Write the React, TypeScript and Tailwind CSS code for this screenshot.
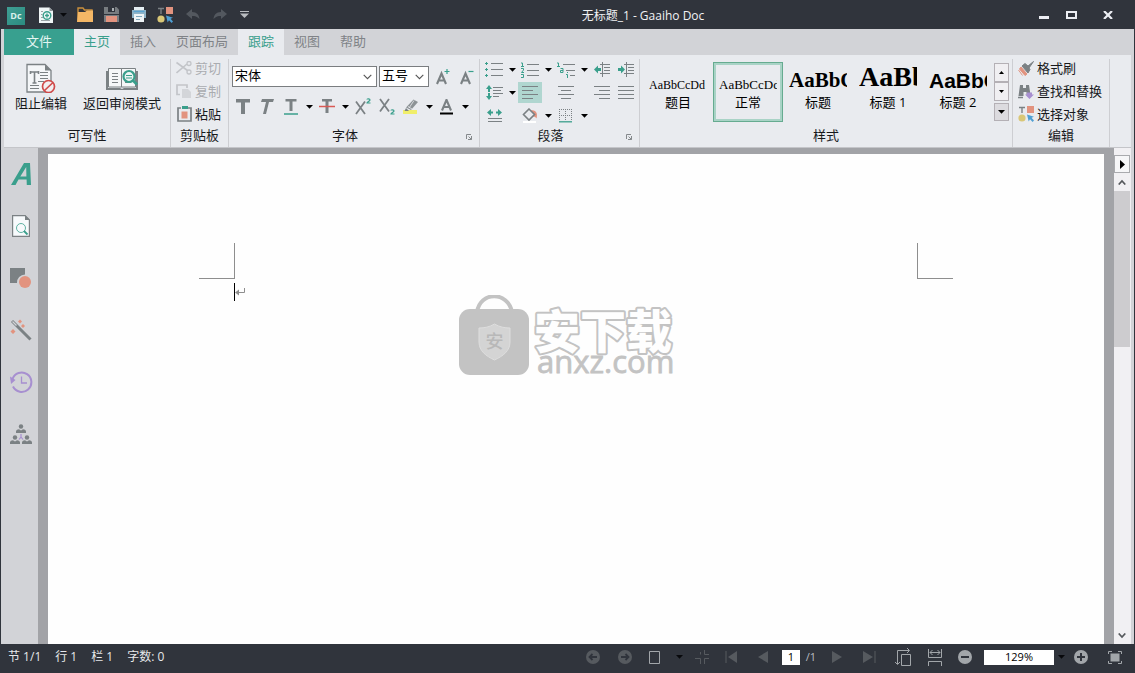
import React from "react";

type Kids = { children?: React.ReactNode };

const GRAY = "#7b8184";
const GREEN = "#3a9f8c";
const RED = "#e2937f";
const PURPLE = "#a78fd0";

function Svg({ w, h, children }: { w: number; h: number } & Kids) {
  return (
    <svg width={w} height={h} viewBox={`0 0 ${w} ${h}`} fill="none" className="block shrink-0" aria-hidden="true">
      {children}
    </svg>
  );
}

function Caret({ color = "#000" }: { color?: string }) {
  return (
    <Svg w={7} h={4}>
      <path d="M0 0h7L3.5 3.8z" fill={color} />
    </Svg>
  );
}

function Chevron() {
  return (
    <Svg w={9} h={6}>
      <path d="M0.7 0.8L4.5 4.6L8.3 0.8" stroke="#555" strokeWidth="1.1" />
    </Svg>
  );
}

/* ---------- Title bar ---------- */

function QuickButton({ label, children }: { label: string } & Kids) {
  return (
    <button aria-label={label} className="flex h-6 w-[27px] items-center justify-center">
      {children}
    </button>
  );
}

function ObjectsIcon() {
  return (
    <Svg w={17} h={16}>
      <path d="M1 1.5h6M4 1.5V7" stroke={GRAY} strokeWidth="1.4" />
      <rect x="9" y="0" width="7" height="7" fill={RED} />
      <circle cx="4" cy="12" r="3.6" fill="#d9c777" />
      <path d="M9 8.5l7 2.3-2.4 1 2.4 2.7-1.4 1.4-2.6-2.6-1.3 2.2z" fill="#4f9fd3" />
    </Svg>
  );
}

function TitleBar() {
  return (
    <header className="flex h-[29px] shrink-0 items-center bg-[#30343c] pl-[7px]">
      <div className="mt-[2px] flex size-[18px] items-center justify-center bg-gradient-to-br from-[#3f9f94] to-[#2b8b80] font-['Open_Sans',sans-serif] text-[9px] leading-none font-bold text-[#d8f0ec]">
        Dc
      </div>
      <button aria-label="新建" className="ml-[9px] flex h-6 w-6 items-center justify-center">
        <Svg w={15} h={16}>
          <path d="M0 0.5h10.5L14 4v12H0z" fill="#f0f6f7" />
          <path d="M10.5 0.5V4H14z" fill="#8d9498" />
          <path d="M2 4.5h2M2 7.5h1.5M2 10.5h2M2 13.5h9" stroke="#9aa3a6" />
          <circle cx="8" cy="8.5" r="3.8" stroke={GREEN} strokeWidth="1.4" />
          <path d="M8 6.5v4M6 8.5h4" stroke={GREEN} strokeWidth="1.4" />
        </Svg>
      </button>
      <button aria-label="新建选项" className="flex h-6 w-[13px] items-center pl-[2px]">
        <Caret color="#08090c" />
      </button>
      <QuickButton label="打开">
        <Svg w={16} h={15}>
          <path d="M1 14.5V1h5l1.500 2H15v11.5" stroke="#c98f3c" strokeWidth="1.4" />
          <path d="M1 5h7l2-1.500h6V15H0z" fill="#f4b766" />
        </Svg>
      </QuickButton>
      <QuickButton label="保存">
        <Svg w={15} h={15}>
          <path d="M0 0h12.5L15 2.5V15H0z" fill="#777c80" />
          <path d="M4 0h7v5H4z" fill="#30343c" />
          <path d="M8 1h2v3H8z" fill="#aab0b3" />
          <path d="M0 7.5h15" stroke="#30343c" />
          <path d="M2 9h11v6H2z" fill={RED} />
        </Svg>
      </QuickButton>
      <QuickButton label="打印">
        <Svg w={16} h={15}>
          <path d="M3 0h10v4H3z" fill="#e4eef2" />
          <path d="M1 3h14v8H1z" fill="#8fb4c8" />
          <path d="M2.5 4.5h11" stroke="#5aa3d0" strokeWidth="1.3" />
          <path d="M3 7h10v8H3z" fill="#eef4f6" />
          <path d="M5 9.5h6M5 12.5h4" stroke="#7da7bd" />
        </Svg>
      </QuickButton>
      <QuickButton label="选择对象"><ObjectsIcon /></QuickButton>
      <QuickButton label="撤销">
        <Svg w={14} h={11}>
          <path d="M0 5l6-5v3c5 0 7 3 7.5 7C11 7.5 9 7 6 7v3z" fill="#53585f" />
        </Svg>
      </QuickButton>
      <QuickButton label="恢复">
        <Svg w={14} h={11}>
          <path d="M14 5L8 0v3C3 3 1 6 0.5 10 3 7.5 5 7 8 7v3z" fill="#53585f" />
        </Svg>
      </QuickButton>
      <button aria-label="自定义快速访问工具栏" className="flex h-6 w-[22px] items-center justify-center">
        <Svg w={9} h={7}>
          <path d="M0 0.5h9" stroke="#b9bcc0" />
          <path d="M0 2.5h9L4.5 7z" fill="#b9bcc0" />
        </Svg>
      </button>
      <h1 className="flex-1 pt-[2px] text-center text-[12px] leading-5 text-[#f1f2f4]">无标题_1 - Gaaiho Doc</h1>
      <div className="flex pr-[6px]">
        <button aria-label="最小化" className="flex h-7 w-[26px] items-center justify-center">
          <Svg w={10} h={8}><path d="M0 6.5h10" stroke="#eceef3" strokeWidth="3" /></Svg>
        </button>
        <button aria-label="最大化" className="flex h-7 w-[29px] items-center justify-center">
          <Svg w={11} h={8}><path d="M1 1h9v6H1z" stroke="#eceef3" strokeWidth="2" /></Svg>
        </button>
        <button aria-label="关闭" className="flex h-7 w-[43px] items-center justify-center">
          <Svg w={10} h={8}><path d="M1 0l8 8M9 0L1 8" stroke="#eceef3" strokeWidth="2.2" /></Svg>
        </button>
      </div>
    </header>
  );
}

/* ---------- Tabs ---------- */

function Tab({ active, lit, children }: { active?: boolean; lit?: boolean } & Kids) {
  const tone = active || lit ? "bg-[#e9ebef] text-[#3a9f8c]" : "text-[#808387]";
  return (
    <button role="tab" aria-selected={!!active} className={`px-[10px] pb-[3px] text-[13px] leading-5 ${tone}`}>
      {children}
    </button>
  );
}

function Tabs() {
  return (
    <nav role="tablist" className="flex h-[26px] shrink-0">
      <button className="w-[70px] bg-[#38a08f] pb-[3px] text-[13px] leading-5 text-[#e4f6f2]">文件</button>
      <Tab active>主页</Tab>
      <Tab>插入</Tab>
      <Tab>页面布局</Tab>
      <Tab lit>跟踪</Tab>
      <Tab>视图</Tab>
      <Tab>帮助</Tab>
    </nav>
  );
}

/* ---------- Ribbon ---------- */

function Group({ title, width, launcher, children }: { title: string; width: string; launcher?: boolean } & Kids) {
  return (
    <section className={`relative flex shrink-0 flex-col border-r border-[#cdced2] ${width}`}>
      <div className="flex-1">{children}</div>
      <h2 className={`pb-[2px] text-center text-[13px] leading-[19px] text-[#17191c] ${launcher ? "pr-[18px]" : ""}`}>{title}</h2>
      {launcher && (
        <button aria-label={`${title}设置`} className="absolute right-[7px] bottom-[7px]">
          <Svg w={6} h={6}>
            <path d="M0.5 5V0.5H5M5.5 2v3.5H2M2.5 2.5l3 3" stroke="#85898c" />
          </Svg>
        </button>
      )}
    </section>
  );
}

function Tool({ label, drop, active, children }: { label: string; drop?: boolean; active?: boolean } & Kids) {
  return (
    <div className="flex">
      <button
        aria-label={label}
        className={`flex h-[21px] w-6 items-center justify-center ${active ? "bg-[#b0d6d0]" : ""}`}
      >
        {children}
      </button>
      {drop && (
        <button aria-label={`${label}选项`} className="flex h-[21px] w-3 items-center justify-center">
          <Caret />
        </button>
      )}
    </div>
  );
}

function SmallButton({ disabled, icon, children }: { disabled?: boolean; icon: React.ReactNode } & Kids) {
  return (
    <button
      disabled={disabled}
      className={`flex h-[18px] items-center gap-[3px] text-[13px] leading-[18px] ${disabled ? "text-[#a9acb0]" : "text-[#17191c]"}`}
    >
      <span className="flex w-4 justify-center">{icon}</span>
      {children}
    </button>
  );
}

function WriteGroup() {
  return (
    <Group title="可写性" width="w-[167px]">
      <div className="flex gap-4 pt-[3px] pl-[11px] text-[13px] leading-5 text-[#17191c]">
        <button className="flex flex-col items-center">
          <Svg w={30} h={31}>
            <path d="M1 2.5h18l6 6V30H1z" fill="#f4f6f8" stroke={GRAY} strokeWidth="1.3" />
            <path d="M19 2.5v6h6z" fill={GRAY} />
            <path d="M4 10h9M8.5 10v11M6.5 21h4M4.5 9v3M12.5 9v3" stroke={GRAY} strokeWidth="1.6" />
            <path d="M14 10.5h8M14 13.5h8M14 16.5h8M12 19.5h6M4 23.5h9M4 26.5h9" stroke={GRAY} />
            <circle cx="22.5" cy="24.5" r="6" fill="#f1eef0" stroke="#d04a4a" strokeWidth="1.7" />
            <path d="M18.5 28.500L27 20.5" stroke="#d04a4a" strokeWidth="1.7" />
          </Svg>
          阻止编辑
        </button>
        <button className="flex flex-col items-center">
          <Svg w={32} h={31}>
            <path d="M0 9h2v17h12l2 1 2-1h12V9h2v19H0z" fill={GRAY} />
            <path d="M2.5 6.5h13v18.5h-13zM15.5 6.5h14v18.5h-14z" fill="#f5f7f8" stroke={GRAY} />
            <path d="M6 11.5h6M6 14.5h6M6 17.5h6M6 20.5h6M19 11.5h3M19 20.5h6" stroke={GRAY} />
            <circle cx="23" cy="14.5" r="5.5" fill="#eef5f4" stroke={GREEN} strokeWidth="2.2" />
            <path d="M20 13.5h6M20 16h6" stroke={GREEN} />
            <path d="M27 18.5l4 4" stroke={GREEN} strokeWidth="2.8" />
          </Svg>
          返回审阅模式
        </button>
      </div>
    </Group>
  );
}

function ClipboardGroup() {
  return (
    <Group title="剪贴板" width="w-[58px]">
      <div className="flex flex-col gap-[5px] pl-[5px]">
        <SmallButton
          disabled
          icon={
            <Svg w={16} h={14}>
              <path d="M0.5 1.5l11 8M0.5 12L11 3" stroke="#c3c5c9" strokeWidth="1.6" />
              <circle cx="13" cy="2.5" r="2" stroke="#c3c5c9" strokeWidth="1.3" />
              <circle cx="13" cy="11" r="2" stroke="#c3c5c9" strokeWidth="1.3" />
            </Svg>
          }
        >
          剪切
        </SmallButton>
        <SmallButton
          disabled
          icon={
            <Svg w={16} h={14}>
              <path d="M4 10.5H1V1h10v3" stroke="#c3c5c9" strokeWidth="1.7" />
              <path d="M6 5h6l3 3v6H6z" fill="#d3d5d9" />
            </Svg>
          }
        >
          复制
        </SmallButton>
        <SmallButton
          icon={
            <Svg w={15} h={16}>
              <path d="M4 2H1v13h13V2h-3" stroke={GRAY} strokeWidth="1.7" />
              <path d="M5 0h6v3H5z" fill={GREEN} />
              <path d="M4.5 5.5h6v7h-6z" fill={RED} />
            </Svg>
          }
        >
          粘贴
        </SmallButton>
      </div>
    </Group>
  );
}

function Combo({ label, width, value }: { label: string; width: string; value: string }) {
  return (
    <label className={`relative block h-[21px] border border-[#7a7d80] bg-white ${width}`}>
      <span className="sr-only">{label}</span>
      <select defaultValue={value} className="block h-full w-full appearance-none bg-transparent pb-[2px] pl-[2px] text-[13px] leading-[17px] text-black outline-none">
        <option>{value}</option>
      </select>
      <span className="pointer-events-none absolute top-[7px] right-[4px]">
        <Chevron />
      </span>
    </label>
  );
}

function Letter({ d, w = 2.1 }: { d: string; w?: number }) {
  return <path d={d} stroke={GRAY} strokeWidth={w} />;
}

function FontGroup() {
  return (
    <Group title="字体" width="w-[251px]" launcher>
      <div className="flex items-center gap-[2px] pt-[7px] pl-[3px]">
        <Combo label="字体" width="w-[145px]" value="宋体" />
        <Combo label="字号" width="w-[50px]" value="五号" />
        <div className="flex">
          <Tool label="增大字号">
            <Svg w={14} h={16}>
              <Letter d="M1 15L5.500 4.500L10 15M2.800 11.500h5.500" />
              <path d="M11 0v5M8.5 2.5h5" stroke={GREEN} strokeWidth="1.2" />
            </Svg>
          </Tool>
          <Tool label="减小字号">
            <Svg w={14} h={16}>
              <Letter d="M1 15L5.500 4.500L10 15M2.800 11.500h5.500" />
              <path d="M8.5 2.5h5" stroke={GREEN} strokeWidth="1.2" />
            </Svg>
          </Tool>
        </div>
      </div>
      <div className="flex pt-[9px] pl-[2px]">
        <Tool label="加粗">
          <Svg w={14} h={15}><path d="M0 0h14v3.5H9V15H5V3.5H0z" fill={GRAY} /></Svg>
        </Tool>
        <Tool label="斜体">
          <Svg w={14} h={15}><path d="M2 0h12l-1 3H9L6 15H3L6 3H1z" fill={GRAY} /></Svg>
        </Tool>
        <Tool label="下划线" drop>
          <Svg w={14} h={17}>
            <path d="M1.500 1h11v2.500H8.500V13h-3V3.500h-4z" fill={GRAY} />
            <path d="M0 16h14" stroke={GREEN} strokeWidth="1.5" />
          </Svg>
        </Tool>
        <Tool label="删除线" drop>
          <Svg w={16} h={15}>
            <path d="M3 0h10v2.5H9.5V14h-3V2.500H3z" fill={GRAY} />
            <path d="M0 7.5h16" stroke="#d95a55" strokeWidth="1.5" />
          </Svg>
        </Tool>
        <Tool label="上标">
          <Svg w={16} h={17}>
            <Letter d="M1 3.5l9 12.500M10 3.500l-9 12.500" w={1.8} />
            <path d="M12 1.5c0-1 3-1 3 0.500 0 1-3 2-3 3h3.500" stroke={GREEN} strokeWidth="1.2" />
          </Svg>
        </Tool>
        <Tool label="下标">
          <Svg w={16} h={17}>
            <Letter d="M1 1l9 12.500M10 1l-9 12.500" w={1.8} />
            <path d="M12 12.5c0-1 3-1 3 0.500 0 1-3 2-3 3h3.500" stroke={GREEN} strokeWidth="1.2" />
          </Svg>
        </Tool>
        <Tool label="突出显示" drop>
          <Svg w={16} h={17}>
            <path d="M0 12h14v4H0z" fill="#f0ee6a" />
            <path d="M3 9.5L10.500 1.500L15 4L8 12z" fill="#8d9396" />
            <path d="M3 10l-1.500 3H6z" fill={GRAY} />
            <path d="M5 8.5l4 2.500M11 2.500L6 10" stroke="#e9ebef" strokeWidth="0.8" />
          </Svg>
        </Tool>
        <Tool label="字体颜色" drop>
          <Svg w={14} h={16}>
            <Letter d="M2 11.500L6.500 0.800L11 11.500M3.800 8h5.500" />
            <path d="M0 14.5h13" stroke="#000" strokeWidth="2" />
          </Svg>
        </Tool>
      </div>
    </Group>
  );
}

function Lines({ d }: { d: string }) {
  return (
    <Svg w={16} h={15}>
      <path d={d} stroke={GRAY} />
    </Svg>
  );
}

function ParagraphGroup() {
  return (
    <Group title="段落" width="w-[160px]" launcher>
      <div className="grid grid-cols-[36px_36px_36px_24px_24px] grid-rows-[23px_23px_21px] pl-[2px]">
        <Tool label="项目符号" drop>
          <Svg w={18} h={15}>
            <path d="M6 1.5h12M6 7.5h12M6 13.5h12" stroke={GRAY} />
            <path d="M0 1.5h3M1.500 0v3M0 7.500h3M1.500 6v3M0 13.500h3M1.500 12v3" stroke={GREEN} />
          </Svg>
        </Tool>
        <Tool label="编号" drop>
          <Svg w={18} h={16}>
            <path d="M6 2.5h12M6 8.5h12M6 13.5h12" stroke={GRAY} />
            <path d="M0 1h1.500V4.500M0 4.500h3M0 6.500h2.500v1.500L0.500 10.500H3M0 12.500h2.500V15.500H0" stroke={GREEN} />
          </Svg>
        </Tool>
        <Tool label="多级列表" drop>
          <Svg w={18} h={16}>
            <path d="M6 2.5h12M9 8.5h9M13 13.5h5" stroke={GRAY} />
            <path d="M0 1h1.500V4.500M0 4.500h3M3.500 6.500H6v4H3.500v-2H6M10.500 10v1M9 12.500h1.500V16" stroke={GREEN} />
          </Svg>
        </Tool>
        <Tool label="减少缩进">
          <Svg w={17} h={15}>
            <path d="M8.500 0v15M6 2.500h10M10 5.500h6M10 8.500h6M6 11.500h10" stroke={GRAY} />
            <path d="M0 7.500l4-4v2.500h3v3H4v2.500z" fill={GREEN} />
          </Svg>
        </Tool>
        <Tool label="增加缩进">
          <Svg w={17} h={15}>
            <path d="M8.500 0v15M6 2.500h10M10 5.500h6M10 8.500h6M6 11.500h10" stroke={GRAY} />
            <path d="M7 7.500l-4-4v2.500H0v3h3v2.500z" fill={GREEN} />
          </Svg>
        </Tool>
        <Tool label="行距" drop>
          <Svg w={17} h={15}>
            <path d="M7 2.500h10M7 5.500h8M7 8.500h10M7 11.500h6" stroke={GRAY} />
            <path d="M3 0L0 4h2v3h2V4h2zM3 15L0 11h2V8h2v3h2z" fill={GREEN} />
          </Svg>
        </Tool>
        <Tool label="左对齐" active><Lines d="M0 1.500h16M0 5.500h11M0 9.500h16M0 13.500h11" /></Tool>
        <Tool label="居中"><Lines d="M0 1.500h16M3 5.500h10M0 9.500h16M3 13.500h10" /></Tool>
        <Tool label="右对齐"><Lines d="M0 1.500h16M5 5.500h11M0 9.500h16M5 13.500h11" /></Tool>
        <Tool label="两端对齐"><Lines d="M0 1.500h16M0 5.500h16M0 9.500h16M0 13.500h16" /></Tool>
        <Tool label="字符宽度">
          <Svg w={15} h={14}>
            <path d="M0 3.500L4 0v2.500h2v2H4V7zM15 3.500L11 0v2.500H9v2h2V7z" fill={GREEN} />
            <path d="M1 9.500h14M1 12.500h14" stroke={GRAY} />
          </Svg>
        </Tool>
        <Tool label="底纹" drop>
          <Svg w={16} h={15}>
            <path d="M9 2.500c5-1 7 3 5.500 8-1-1.500-2-2-4-2z" fill={RED} />
            <path d="M7 1l5.500 5.500L7 12 1.500 6.500z" fill="#e9ebef" stroke={GRAY} strokeWidth="1.6" />
            <path d="M1 14h13" stroke="#fff" strokeWidth="2" />
          </Svg>
        </Tool>
        <Tool label="边框" drop>
          <Svg w={14} h={14}>
            <path d="M0.500 0v12M6.500 0v12M12.500 0v12M0 0.500h13M0 6.500h13" stroke={GRAY} strokeDasharray="1 1" />
            <path d="M0 12.800h13" stroke={GREEN} strokeWidth="1.3" />
          </Svg>
        </Tool>
      </div>
    </Group>
  );
}

const styleItems = [
  { name: "题目", font: "font-['Liberation_Serif',serif] text-[12px]" },
  { name: "正常", font: "font-['Liberation_Serif',serif] text-[13px]", on: true },
  { name: "标题", font: "font-['Liberation_Serif',serif] text-[21px] font-bold" },
  { name: "标题 1", font: "font-['Liberation_Serif',serif] text-[28px] font-bold" },
  { name: "标题 2", font: "font-['Liberation_Sans',sans-serif] text-[21px] font-bold" },
];

function StylesGroup() {
  return (
    <Group title="样式" width="w-[373px]">
      <div className="flex pt-[3px] pl-[3px]">
        {styleItems.map((s) => (
          <button
            key={s.name}
            aria-label={s.name}
            className={`flex h-[60px] w-[70px] flex-col border px-[5px] pt-px text-black ${s.on ? "border-[#66ab90] inset-ring-2 inset-ring-[#a9d3c6]" : "border-transparent"}`}
          >
            <span className={`flex h-[27px] w-full items-end overflow-hidden leading-none ${s.font}`}>AaBbCcDd</span>
            <span className="w-full text-center text-[13px] leading-[22px]">{s.name}</span>
          </button>
        ))}
        <div className="flex flex-col pt-[1px] pl-[1px]">
          <button aria-label="上一行" className="flex h-[19px] w-[15px] items-center justify-center border border-[#b4b0b5] bg-[#f0eff2]">
            <Svg w={5} h={3}><path d="M0 3h5L2.500 0z" fill="#000" /></Svg>
          </button>
          <button aria-label="下一行" className="flex h-[19px] w-[15px] items-center justify-center border border-[#b4b0b5] bg-[#f0eff2]">
            <Svg w={5} h={3}><path d="M0 0h5L2.500 3z" fill="#000" /></Svg>
          </button>
          <button aria-label="更多样式" className="mt-[2px] flex h-[18px] w-[15px] items-center justify-center border border-[#b4b0b5] bg-[#dcdbdf]">
            <Caret />
          </button>
        </div>
      </div>
    </Group>
  );
}

function EditGroup() {
  return (
    <Group title="编辑" width="w-[97px]">
      <div className="flex flex-col gap-[5px] pl-[5px]">
        <SmallButton
          icon={
            <Svg w={16} h={15}>
              <path d="M15.500 0.500L10 5l-3-2.500L4 5l6 7 2-3.500L11 7z" fill={GRAY} stroke={GRAY} />
              <path d="M3 6l6 7-2 1.500L1.500 8zM0.500 9l4 5.500" fill={RED} stroke={RED} />
            </Svg>
          }
        >
          格式刷
        </SmallButton>
        <SmallButton
          icon={
            <Svg w={16} h={15}>
              <path d="M2 1h3v3h3V1h3l1.500 10H8.500V8h-3v4H0.500z" fill={GRAY} />
              <path d="M0 13.500h5" stroke={GRAY} strokeWidth="1.5" />
              <path d="M9 8.500h5v2h2L11.500 15 7 10.500h2z" fill={PURPLE} />
            </Svg>
          }
        >
          查找和替换
        </SmallButton>
        <SmallButton icon={<ObjectsIcon />}>选择对象</SmallButton>
      </div>
    </Group>
  );
}

function Ribbon() {
  return (
    <div className="flex h-[93px] shrink-0 border-b border-[#c4c5c9] bg-[#e9ebef] pt-1">
      <WriteGroup />
      <ClipboardGroup />
      <FontGroup />
      <ParagraphGroup />
      <StylesGroup />
      <EditGroup />
    </div>
  );
}

/* ---------- Work area ---------- */

function SideButton({ label, children }: { label: string } & Kids) {
  return (
    <button aria-label={label} className="flex h-[52px] w-full items-center justify-center">
      {children}
    </button>
  );
}

function Person({ x, y }: { x: number; y: number }) {
  return (
    <g fill={GRAY}>
      <circle cx={x} cy={y} r="2.2" />
      <path d={`M${x - 5} ${y + 6.5}v-1.500q0-2 3-2.300l2 1.300 2-1.300q3 0.300 3 2.300v1.500z`} />
    </g>
  );
}

function Sidebar() {
  return (
    <aside className="flex w-[37px] shrink-0 flex-col bg-[#d2d3d7] pl-[3px]">
      <SideButton label="文本">
        <Svg w={20} h={22}>
          <path d="M0 22L13 0h6l1 22h-4.200l-0.200-5.500H7.500L4.500 22zM9.300 13.500h6.100L15.200 4z" fill={GREEN} fillRule="evenodd" />
        </Svg>
      </SideButton>
      <SideButton label="预览">
        <Svg w={18} h={22}>
          <path d="M0.600 0.600h12.500L17.400 5v16.400H0.600z" fill="#f7fafc" stroke={GRAY} strokeWidth="1.2" />
          <path d="M13 0v5h5z" fill={GRAY} />
          <circle cx="9" cy="13" r="4.5" stroke={GREEN} strokeWidth="0.8" />
          <path d="M12 16l3.500 3.500" stroke={GREEN} strokeWidth="1.8" />
        </Svg>
      </SideButton>
      <SideButton label="形状">
        <Svg w={22} h={20}>
          <path d="M0 0h15v6.500a8 8 0 0 0-8 8.500H0z" fill={GRAY} />
          <circle cx="15" cy="14" r="6" fill={RED} />
        </Svg>
      </SideButton>
      <SideButton label="魔术棒">
        <Svg w={22} h={22}>
          <path d="M2 2l18.500 18.500" stroke={GRAY} strokeWidth="3" />
          <path d="M2.500 2.500l4 4" stroke="#d2d3d7" strokeWidth="1.2" />
          <path d="M3 10l2.500 2.500L3 15 0.500 12.500zM10 0.500L12 2.500l-2 2-2-2zM13 5l2 2-2 2-2-2z" fill={RED} />
        </Svg>
      </SideButton>
      <SideButton label="历史记录">
        <Svg w={23} h={22}>
          <path d="M2.500 8A9.700 9.700 0 1 1 3 15.500" stroke={PURPLE} strokeWidth="2" />
          <path d="M0 5.500L5.500 9 1 13z" fill={PURPLE} />
          <path d="M11.500 5.500V12H17" stroke={PURPLE} strokeWidth="1.3" />
        </Svg>
      </SideButton>
      <SideButton label="协作">
        <Svg w={22} h={21}>
          <Person x={11} y={2.5} />
          <Person x={5} y={13.5} />
          <Person x={17} y={13.5} />
          <path d="M11 10v3l-2 2.500M11 13l2 2.500" stroke={PURPLE} strokeWidth="1.2" />
        </Svg>
      </SideButton>
    </aside>
  );
}

function Watermark() {
  return (
    <svg width="216" height="84" viewBox="0 0 216 84" fill="none" className="absolute top-[141px] left-[411px]" role="img" aria-label="安下载 anxz.com">
      <path d="M18 17C21 -4 49 -4 53 17" stroke="#c3c3c3" strokeWidth="4" />
      <rect x="0" y="14" width="70" height="66" rx="11" fill="#c3c3c3" />
      <path d="M35.500 29c5 3 10 4 15.500 4v14c0 9-7 14-15.500 18C27 61 20 56 20 47V33c5.500 0 10.500-1 15.500-4z" fill="#d4d4d4" stroke="#dedede" />
      <text x="35.500" y="53" textAnchor="middle" fontSize="18" fontWeight="500" fill="#b8b8b8">安</text>
      <text x="75" y="53" fontSize="46" fontWeight="900" fill="#fefefe" stroke="#c3c3c3" strokeWidth="4" strokeLinejoin="round" paintOrder="stroke">安下载</text>
      <text x="78" y="78" className="font-['Open_Sans',sans-serif]" fontSize="31" fill="#c3c3c3" stroke="#c3c3c3" strokeWidth="0.8">anxz.com</text>
    </svg>
  );
}

function Document() {
  return (
    <main className="flex min-w-0 flex-1 bg-[#a2a3a7] pt-[6px] pr-[10px] pl-[10px]">
      <div className="relative flex-1 bg-[#fefefe] pt-[89px]">
        <div className="flex justify-between px-[151px]">
          <div className="size-9 border-r border-b border-[#8e8e8e]" />
          <div className="size-9 border-b border-l border-[#8e8e8e]" />
        </div>
        <div className="mt-1 flex items-center pl-[186px]">
          <div className="h-[18px] w-px bg-black" />
          <Svg w={10} h={8}>
            <path d="M9.500 0v4.500H3" stroke="#8e8e8e" />
            <path d="M0 4.500L4 1.500v6z" fill="#8e8e8e" />
          </Svg>
        </div>
        <Watermark />
      </div>
    </main>
  );
}

function ScrollBar() {
  return (
    <div className="flex w-[17px] shrink-0 flex-col bg-[#f1f0f3] pr-px">
      <div className="h-[8px] shrink-0 border-b border-[#a9aaae]" />
      <button aria-label="展开面板" className="flex h-[17px] shrink-0 items-center justify-center border border-t-0 border-[#a9aaae] bg-[#f6f6f8]">
        <Svg w={5} h={9}><path d="M0 0v9l5-4.500z" fill="#000" /></Svg>
      </button>
      <button aria-label="向上滚动" className="flex h-[18px] shrink-0 items-center justify-center">
        <Svg w={8} h={6}><path d="M0.700 5.500L4 2l3.300 3.500" stroke="#55585c" strokeWidth="1.7" /></Svg>
      </button>
      <div className="h-[156px] shrink-0 bg-[#cdcccf]" />
      <div className="flex-1" />
      <button aria-label="向下滚动" className="flex h-[17px] shrink-0 items-center justify-center">
        <Svg w={8} h={6}><path d="M0.700 0.500L4 4l3.300-3.500" stroke="#55585c" strokeWidth="1.7" /></Svg>
      </button>
    </div>
  );
}

/* ---------- Status bar ---------- */

function StatusButton({ label, width, children }: { label: string; width: string } & Kids) {
  return (
    <button aria-label={label} className={`flex h-6 shrink-0 items-center justify-center ${width}`}>
      {children}
    </button>
  );
}

function StatusBar() {
  const dim = "#565a5f";
  const lit = "#a2a6aa";
  return (
    <footer className="flex h-[29px] shrink-0 items-center justify-between bg-[#30343c] pb-[3px] pl-2 text-[12px] leading-5 text-[#e6e8ea]">
      <div className="flex gap-[14px]">
        <span>节 1/1</span>
        <span>行 1</span>
        <span>栏 1</span>
        <span>字数: 0</span>
      </div>
      <div className="flex items-center">
        <StatusButton label="后退" width="w-8">
          <Svg w={14} h={14}>
            <circle cx="7" cy="7" r="7" fill={dim} />
            <path d="M11 7H4M6.500 4L3.500 7l3 3" stroke="#30343c" strokeWidth="1.8" />
          </Svg>
        </StatusButton>
        <StatusButton label="前进" width="w-8">
          <Svg w={14} h={14}>
            <circle cx="7" cy="7" r="7" fill={dim} />
            <path d="M3 7h7M7.500 4l3 3-3 3" stroke="#30343c" strokeWidth="1.8" />
          </Svg>
        </StatusButton>
        <StatusButton label="单页视图" width="w-[26px]">
          <Svg w={11} h={13}><path d="M0.500 0.500h10v12h-10z" stroke={lit} /></Svg>
        </StatusButton>
        <StatusButton label="视图选项" width="w-6"><Caret color="#08090c" /></StatusButton>
        <StatusButton label="缩小区域" width="w-[22px]">
          <Svg w={14} h={14}>
            <path d="M9.500 0v4.500H14M0 8.500h5.500V14M9.500 14V8.500H14M5.500 4.500V2" stroke={dim} />
          </Svg>
        </StatusButton>
        <StatusButton label="第一页" width="w-9">
          <Svg w={13} h={12}><path d="M1 0v12" stroke={dim} /><path d="M12 0v12L3 6z" fill={dim} /></Svg>
        </StatusButton>
        <StatusButton label="上一页" width="w-7">
          <Svg w={10} h={12}><path d="M10 0v12L0 6z" fill={dim} /></Svg>
        </StatusButton>
        <input aria-label="页码" defaultValue="1" className="ml-[5px] h-[15px] w-[18px] bg-white pb-px text-center text-[11px] leading-[14px] text-black outline-none" />
        <span className="w-[22px] text-center text-[11px] text-[#b9bcc0]">/1</span>
        <StatusButton label="下一页" width="w-[30px]">
          <Svg w={10} h={12}><path d="M0 0v12l10-6z" fill={dim} /></Svg>
        </StatusButton>
        <StatusButton label="最后一页" width="w-[34px]">
          <Svg w={13} h={12}><path d="M12 0v12" stroke={dim} /><path d="M0 0v12l10-6z" fill={dim} /></Svg>
        </StatusButton>
        <StatusButton label="适合页面" width="w-[34px]">
          <Svg w={16} h={18}>
            <path d="M6.500 6.500h9v11h-9zM2.500 16V2.500H14M12 0l2.500 2.500L12 5M0 14l2.500 2.500L5 14" stroke={lit} />
          </Svg>
        </StatusButton>
        <StatusButton label="适合宽度" width="w-[30px]">
          <Svg w={14} h={18}>
            <path d="M0.500 1v8.500h13V1M2 4.500h10M4.500 2L2 4.500 4.500 7M9.500 2L12 4.500 9.500 7M0.500 18v-4.500h13V18" stroke={lit} />
          </Svg>
        </StatusButton>
        <StatusButton label="缩小" width="w-[30px]">
          <Svg w={14} h={14}>
            <circle cx="7" cy="7" r="7" fill={lit} />
            <path d="M3 7h8" stroke="#30343c" strokeWidth="2" />
          </Svg>
        </StatusButton>
        <input aria-label="缩放比例" defaultValue="129%" className="ml-1 h-[15px] w-[70px] bg-white pb-px text-center text-[11px] leading-[14px] text-black outline-none" />
        <StatusButton label="缩放选项" width="w-[14px]"><Caret color="#08090c" /></StatusButton>
        <StatusButton label="放大" width="w-[26px]">
          <Svg w={14} h={14}>
            <circle cx="7" cy="7" r="7" fill={lit} />
            <path d="M3 7h8M7 3v8" stroke="#30343c" strokeWidth="2" />
          </Svg>
        </StatusButton>
        <StatusButton label="全屏" width="w-[41px]">
          <Svg w={14} h={13}>
            <path d="M0.500 3V0.500H4M10 0.500h3.500V3M0.500 10v2.500H4M10 12.500h3.500V10" stroke={lit} />
            <path d="M2.500 2.500h9v8h-9z" fill={lit} />
          </Svg>
        </StatusButton>
      </div>
    </footer>
  );
}

export default function App() {
  return (
    <div className="flex h-screen flex-col overflow-hidden bg-[#30343c] font-['Open_Sans','Noto_Sans_CJK_SC',sans-serif]">
      <TitleBar />
      <div className="mx-px flex min-h-0 flex-1 flex-col bg-[#d2d3d7] pr-[3px]">
        <div className="pl-[3px]">
          <Tabs />
          <Ribbon />
        </div>
        <div className="flex min-h-0 flex-1">
          <Sidebar />
          <Document />
          <ScrollBar />
        </div>
      </div>
      <StatusBar />
    </div>
  );
}
